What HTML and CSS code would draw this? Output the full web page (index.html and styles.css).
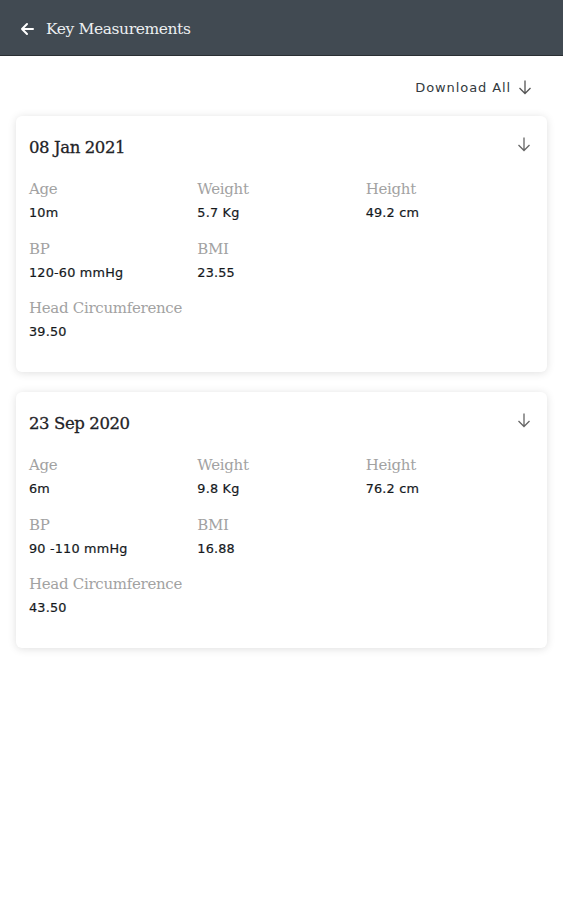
FILE: index.html
```html
<!DOCTYPE html>
<html>
<head>
<meta charset="utf-8">
<link rel="stylesheet" href="styles.css">
</head>
<body>
<header class="appbar">
  <svg class="back" width="16" height="16" viewBox="0 0 16 16"><path d="M14 8H3M8 3L3 8l5 5" fill="none" stroke="#fff" stroke-width="2" stroke-linecap="round" stroke-linejoin="round"/></svg>
  <span class="title">Key Measurements</span>
</header>
<main class="content">
  <div class="toolbar">
    <span class="dl-all">Download All</span>
    <svg class="down" width="16" height="16" viewBox="0 0 16 16"><path d="M8 1.5v13M2.5 9l5.5 5.5L13.5 9" fill="none" stroke="#555" stroke-width="1.3"/></svg>
  </div>
  <section class="card">
    <div class="card-head">
      <h2 class="date">08 Jan 2021</h2>
      <svg class="down" width="16" height="16" viewBox="0 0 16 16"><path d="M8 1.5v13M2.5 9l5.5 5.5L13.5 9" fill="none" stroke="#666" stroke-width="1.3"/></svg>
    </div>
    <div class="grid">
      <div class="item"><div class="label">Age</div><div class="value">10m</div></div>
      <div class="item"><div class="label">Weight</div><div class="value">5.7 Kg</div></div>
      <div class="item"><div class="label">Height</div><div class="value">49.2 cm</div></div>
      <div class="item"><div class="label">BP</div><div class="value">120-60 mmHg</div></div>
      <div class="item"><div class="label">BMI</div><div class="value">23.55</div></div>
      <div class="item"></div>
      <div class="item wide"><div class="label">Head Circumference</div><div class="value">39.50</div></div>
    </div>
  </section>
  <section class="card">
    <div class="card-head">
      <h2 class="date">23 Sep 2020</h2>
      <svg class="down" width="16" height="16" viewBox="0 0 16 16"><path d="M8 1.5v13M2.5 9l5.5 5.5L13.5 9" fill="none" stroke="#666" stroke-width="1.3"/></svg>
    </div>
    <div class="grid">
      <div class="item"><div class="label">Age</div><div class="value">6m</div></div>
      <div class="item"><div class="label">Weight</div><div class="value">9.8 Kg</div></div>
      <div class="item"><div class="label">Height</div><div class="value">76.2 cm</div></div>
      <div class="item"><div class="label">BP</div><div class="value">90 -110 mmHg</div></div>
      <div class="item"><div class="label">BMI</div><div class="value">16.88</div></div>
      <div class="item"></div>
      <div class="item wide"><div class="label">Head Circumference</div><div class="value">43.50</div></div>
    </div>
  </section>
</main>
</body>
</html>
```
FILE: styles.css
```css
* { box-sizing: border-box; }
html, body { margin: 0; padding: 0; background: #fff; }
body { width: 563px; height: 900px; font-family: "DejaVu Sans", sans-serif; }

.appbar {
  height: 56px;
  background: #414a52;
  display: flex;
  align-items: center;
  padding: 0 0 0 19px;
  gap: 11px;
  border-bottom: 1px solid #2a2f33;
}
.appbar .back { margin-top: 2px; }
.appbar .title {
  font-family: "DejaVu Serif", "Liberation Serif", serif;
  color: #eceff1;
  font-size: 15.5px;
  letter-spacing: -0.4px;
  margin-top: 3px;
}

.content { padding: 0 16px; }

.toolbar {
  display: flex;
  justify-content: flex-end;
  align-items: center;
  gap: 6px;
  height: 60px;
  padding-top: 2px;
  padding-right: 14px;
}
.dl-all {
  font-size: 13px;
  color: #333a40;
  letter-spacing: 0.9px;
}

.card {
  background: #fff;
  border-radius: 6px;
  box-shadow: 0 1px 8px rgba(0,0,0,0.13);
  padding: 19px 13px 27px 13px;
  margin-bottom: 20px;
  height: 256px;
}
.card-head {
  display: flex;
  justify-content: space-between;
  align-items: center;
  height: 24px;
  padding-right: 2px;
}
.date {
  margin: 0;
  font-family: "DejaVu Serif", "Liberation Serif", serif;
  font-weight: normal;
  font-size: 16.5px;
  color: #1f2327;
  letter-spacing: -0.4px;
  -webkit-text-stroke: 0.3px #1f2327;
}
.card-head .down { margin-top: -7px; }

.grid {
  display: grid;
  grid-template-columns: repeat(3, 1fr);
  row-gap: 12.5px;
  margin-top: 18px;
}
.item { height: 47px; }
.wide { grid-column: 1 / span 2; }
.label {
  font-family: "DejaVu Serif", "Liberation Serif", serif;
  font-size: 15px;
  color: #a2a2a2;
  height: 25px;
  line-height: 24px;
  letter-spacing: -0.3px;
}
.value {
  font-size: 12.8px;
  color: #15191c;
  line-height: 22px;
  letter-spacing: 0.2px;
  -webkit-text-stroke: 0.2px #15191c;
}
```
